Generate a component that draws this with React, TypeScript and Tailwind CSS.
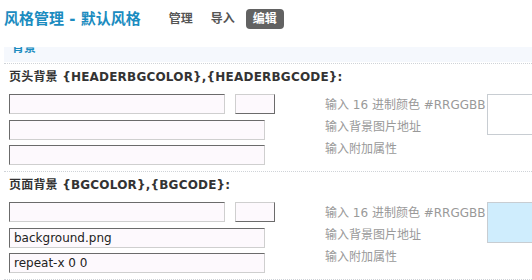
import React from 'react';

const cjk = "font-['DejaVu_Sans','Noto_Sans_CJK_SC',sans-serif]";

// inset-looking text input, like old-school admin forms
const Field = ({ value = '', w, className = '' }: { value?: string; w: string; className?: string }) => (
  <div
    className={`${w} h-[20px] overflow-hidden bg-[#fdf9fd] border border-t-[#6b6b6b] border-l-[#6b6b6b] border-r-[#cfcfcf] border-b-[#cfcfcf] pl-[4px] text-[12px] leading-[18px] text-[#222]`}
  >
    <div className={className}>{value}</div>
  </div>
);

const Swatch = () => (
  <div className="w-[40px] h-[20px] bg-[#fdf9fd] border border-t-[#cfcfcf] border-l-[#cfcfcf] border-r-[#6b6b6b] border-b-[#6b6b6b]" />
);

const Section = ({
  title,
  values,
  preview,
}: {
  title: string;
  values: [string, string];
  preview: string;
}) => (
  <div className="border-t border-dotted border-[#cfd3d8] pl-[5px] pt-[5px] pb-[6px]">
    <div className="h-[16px] overflow-hidden text-[12px] leading-[16px] font-bold text-[#333] tracking-[0.2px] whitespace-nowrap">{title}</div>
    <div className="flex mt-[9px]">
      <div className="w-[316px] shrink-0 flex flex-col gap-[5px]">
        <div className="flex gap-[10px] mb-[1px]">
          <Field w="w-[216px]" />
          <Swatch />
        </div>
        <Field w="w-[256px]" value={values[0]} />
        <Field w="w-[256px]" value={values[1]} />
      </div>
      <div className="w-[162px] shrink-0 text-[12px] text-[#999] whitespace-nowrap">
        <div className="h-[22px] leading-[22px] overflow-hidden">输入 16 进制颜色 #RRGGBB</div>
        <div className="h-[22px] leading-[22px] overflow-hidden">输入背景图片地址</div>
        <div className="h-[22px] leading-[22px] overflow-hidden">输入附加属性</div>
      </div>
      <div className={`w-[60px] h-[41px] shrink-0 border border-[#c8cdd2] ${preview}`} />
    </div>
  </div>
);

export default function App() {
  return (
    <div className={`w-[532px] h-[280px] overflow-hidden bg-white ${cjk}`}>
      <div className="h-[47px] flex items-start pl-[4px] pt-[10px]">
        <div className="text-[15px] leading-[18px] font-bold text-[#1b8cc0] whitespace-nowrap">风格管理 - 默认风格</div>
        <div className="flex items-center ml-[28px] -mt-[1px] text-[12px] font-bold text-[#555]">
          <span className="mr-[18px]">管理</span>
          <span className="mr-[11px]">导入</span>
          <span className="bg-[#626262] text-white rounded-[4px] px-[7px] h-[20px] leading-[20px]">编辑</span>
        </div>
      </div>
      <div className="ml-[4px] h-[15px] bg-[#f5f8fd] overflow-hidden">
        <div className="-mt-[6px] pl-[8px] text-[12px] leading-[14px] font-bold text-[#1b8cc0]">背景</div>
      </div>
      <div className="ml-[4px] mt-[1px]">
        <Section title="页头背景 {HEADERBGCOLOR},{HEADERBGCODE}:" values={['', '']} preview="bg-white" />
        <Section title="页面背景 {BGCOLOR},{BGCODE}:" values={['background.png', 'repeat-x 0 0']} preview="bg-[#cfedfd]" />
        <div className="border-t border-dotted border-[#cfd3d8]" />
      </div>
    </div>
  );
}
